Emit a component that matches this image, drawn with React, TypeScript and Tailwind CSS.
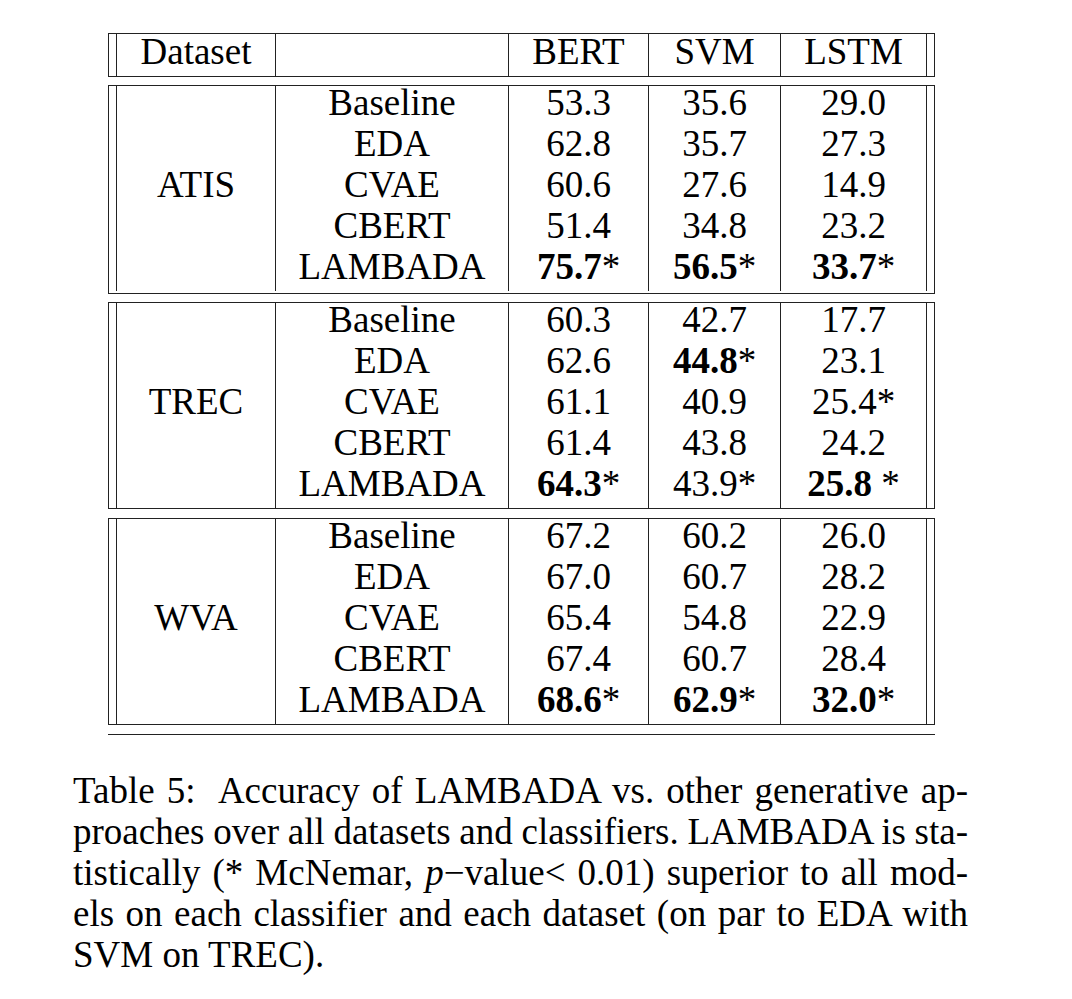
type Cell = { v: string; b?: boolean; s?: string };
type Row = { m: string; cells: Cell[] };
type Section = { name: string; rows: Row[]; extra: string };

const c = (v: string): Cell => ({ v });
const star = (v: string, s = "*"): Cell => ({ v, b: true, s });

const sections: Section[] = [
  {
    name: "ATIS",
    extra: "mt-[8px] pb-[2px]",
    rows: [
      { m: "Baseline", cells: [c("53.3"), c("35.6"), c("29.0")] },
      { m: "EDA", cells: [c("62.8"), c("35.7"), c("27.3")] },
      { m: "CVAE", cells: [c("60.6"), c("27.6"), c("14.9")] },
      { m: "CBERT", cells: [c("51.4"), c("34.8"), c("23.2")] },
      { m: "LAMBADA", cells: [star("75.7"), star("56.5"), star("33.7")] },
    ],
  },
  {
    name: "TREC",
    extra: "mt-[8px]",
    rows: [
      { m: "Baseline", cells: [c("60.3"), c("42.7"), c("17.7")] },
      { m: "EDA", cells: [c("62.6"), star("44.8"), c("23.1")] },
      { m: "CVAE", cells: [c("61.1"), c("40.9"), c("25.4*")] },
      { m: "CBERT", cells: [c("61.4"), c("43.8"), c("24.2")] },
      { m: "LAMBADA", cells: [star("64.3"), c("43.9*"), star("25.8", "\u00a0*")] },
    ],
  },
  {
    name: "WVA",
    extra: "mt-[9px]",
    rows: [
      { m: "Baseline", cells: [c("67.2"), c("60.2"), c("26.0")] },
      { m: "EDA", cells: [c("67.0"), c("60.7"), c("28.2")] },
      { m: "CVAE", cells: [c("65.4"), c("54.8"), c("22.9")] },
      { m: "CBERT", cells: [c("67.4"), c("60.7"), c("28.4")] },
      { m: "LAMBADA", cells: [star("68.6"), star("62.9"), star("32.0")] },
    ],
  },
];

const widths = ["w-[159px]", "w-[233px]", "w-[140px]", "w-[132px]", "w-[146px]"];

function Value({ cell }: { cell: Cell }) {
  if (!cell.b) return <>{cell.v}</>;
  return (
    <>
      <span className="font-bold">{cell.v}</span>
      {cell.s}
    </>
  );
}

function Line({ children }: { children?: React.ReactNode }) {
  return <div className="h-[41px] leading-[33px] text-center whitespace-pre">{children}</div>;
}

function Block({ section }: { section: Section }) {
  return (
    <div className={`flex border border-[#222] w-[827px] ${section.extra}`}>
      <div className="w-[8px] border-r border-[#222]" />
      <div className={`${widths[0]} border-r border-[#222]`}>
        <Line />
        <Line />
        <Line>{section.name}</Line>
        <Line />
        <Line />
      </div>
      <div className={`${widths[1]} border-r border-[#222]`}>
        {section.rows.map((r) => (
          <Line key={r.m}>{r.m}</Line>
        ))}
      </div>
      {[0, 1, 2].map((i) => (
        <div key={i} className={`${widths[i + 2]} border-r border-[#222]`}>
          {section.rows.map((r) => (
            <Line key={r.m}>
              <Value cell={r.cells[i]} />
            </Line>
          ))}
        </div>
      ))}
      <div className="w-[7px]" />
    </div>
  );
}

export default function App() {
  return (
    <div
      className="bg-white w-[1072px] h-[999px] text-black text-[37px]"
      style={{ fontFamily: '"Liberation Serif", "Times New Roman", serif' }}
    >
      <div className="pt-[33px] pl-[108px]">
        {/* header */}
        <div className="flex border border-[#222] w-[827px] h-[44px]">
          <div className="w-[8px] border-r border-[#222]" />
          <div className="w-[159px] border-r border-[#222] leading-[33px] pt-[1px] text-center">Dataset</div>
          <div className="w-[233px] border-r border-[#222]" />
          <div className="w-[140px] border-r border-[#222] leading-[33px] pt-[1px] text-center">BERT</div>
          <div className="w-[132px] border-r border-[#222] leading-[33px] pt-[1px] text-center">SVM</div>
          <div className="w-[146px] border-r border-[#222] leading-[33px] pt-[1px] text-center">LSTM</div>
          <div className="w-[7px]" />
        </div>

        {sections.map((s) => (
          <Block key={s.name} section={s} />
        ))}

        <div className="mt-[9px] h-px w-[827px] bg-[#222]" />
      </div>

      {/* caption */}
      <div className="ml-[73px] mt-[35px] w-[895px] leading-[41px] [word-spacing:-4px]">
        <div className="text-justify [text-align-last:justify]">Table 5:&nbsp; Accuracy of LAMBADA vs. other generative ap-</div>
        <div className="text-justify [text-align-last:justify]">proaches over all datasets and classifiers. LAMBADA is sta-</div>
        <div className="text-justify [text-align-last:justify]">
          tistically (* McNemar, <i>p</i>−value&lt; 0.01) superior to all mod-
        </div>
        <div className="text-justify [text-align-last:justify]">els on each classifier and each dataset (on par to EDA with</div>
        <div className="[word-spacing:0px]">SVM on TREC).</div>
      </div>
    </div>
  );
}
